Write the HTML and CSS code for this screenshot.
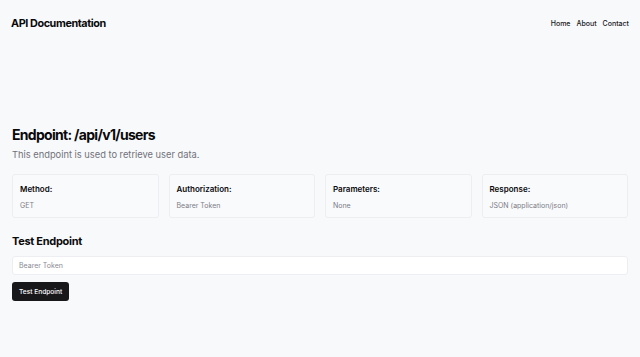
FILE: index.html
```html
<!DOCTYPE html>
<html lang="en">
<head>
    <meta charset="UTF-8">
    <meta name="viewport" content="width=device-width, initial-scale=1.0">
    <title>API Documentation</title>
    <link rel="stylesheet" href="styles.css">
</head>
<body>

    <!-- Top bar -->
    <header class="topbar">
        <div class="brand">API Documentation</div>
        <nav class="nav">
            <a href="#">Home</a>
            <a href="#">About</a>
            <a href="#">Contact</a>
        </nav>
    </header>

    <main class="content">
        <h1 class="endpoint-title">Endpoint: /api/v1/users</h1>
        <p class="endpoint-desc">This endpoint is used to retrieve user data.</p>

        <!-- Endpoint details -->
        <div class="details">
            <div class="card">
                <h3>Method:</h3>
                <p>GET</p>
            </div>
            <div class="card">
                <h3>Authorization:</h3>
                <p>Bearer Token</p>
            </div>
            <div class="card">
                <h3>Parameters:</h3>
                <p>None</p>
            </div>
            <div class="card">
                <h3>Response:</h3>
                <p>JSON (application/json)</p>
            </div>
        </div>

        <!-- Try it -->
        <h2 class="test-title">Test Endpoint</h2>
        <input class="token-input" type="text" placeholder="Bearer Token">
        <button class="test-btn">Test Endpoint</button>
    </main>

</body>
</html>
```

FILE: styles.css
```css
/* Base */
body {
    font-family: Inter, "Noto Sans", sans-serif;
    background-color: #f8f9fb;
    color: #09090b;
    margin: 0;
    padding: 0;
}

/* Top bar */
.topbar {
    display: flex;
    justify-content: space-between;
    align-items: center;
    height: 47px;
    padding: 0 11px 0 11px;
}

.brand {
    font-size: 10.8px;
    font-weight: 700;
    letter-spacing: -0.4px;
}

.nav {
    display: flex;
    gap: 6px;
}

.nav a {
    color: #18181b;
    text-decoration: none;
    font-size: 7px;
    font-weight: 500;
}

/* Main content */
.content {
    padding: 77px 12px 0 12px;
}

.endpoint-title {
    font-size: 14px;
    font-weight: 700;
    letter-spacing: -0.7px;
    margin: 0;
    line-height: 22px;
}

.endpoint-desc {
    font-size: 9.3px;
    color: #71717a;
    margin: 2px 0 0 0;
    line-height: 14px;
}

.details {
    display: grid;
    grid-template-columns: repeat(4, 1fr);
    gap: 10px;
    margin-top: 12px;
}

.card {
    background-color: #f9fafc;
    border: 1px solid #eceef2;
    border-radius: 3px;
    padding: 9px 7px 7px 7px;
    height: 26px;
}

.card h3 {
    font-size: 8px;
    font-weight: 600;
    margin: 0;
    line-height: 11px;
}

.card p {
    font-size: 7px;
    color: #7c7c86;
    margin: 6px 0 0 0;
    line-height: 10px;
}

.test-title {
    font-size: 11px;
    font-weight: 700;
    letter-spacing: -0.3px;
    margin: 15px 0 0 0;
    line-height: 16px;
}

.token-input {
    display: block;
    box-sizing: border-box;
    width: 100%;
    height: 19px;
    margin-top: 7px;
    padding: 0 6px;
    border: 1px solid #eceef2;
    border-radius: 3px;
    background-color: #fff;
    font-family: inherit;
    font-size: 7px;
    outline: none;
}

.token-input::placeholder {
    color: #8a8a93;
}

.test-btn {
    display: block;
    margin-top: 7px;
    height: 19px;
    padding: 0 7px;
    border: none;
    border-radius: 3px;
    background-color: #18181b;
    color: #fff;
    font-family: inherit;
    font-size: 6.6px;
    font-weight: 500;
    cursor: pointer;
}
```
